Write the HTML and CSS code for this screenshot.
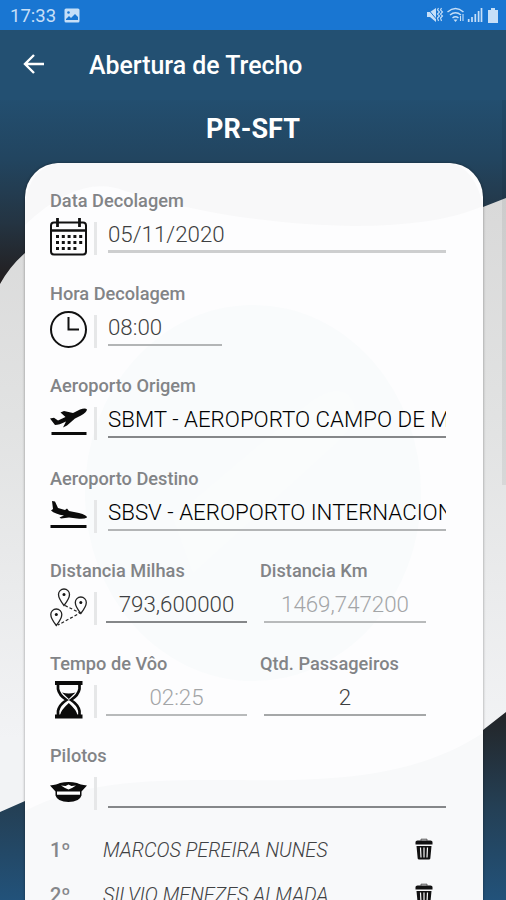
FILE: index.html
```html
<!DOCTYPE html>
<html lang="pt-BR">
<head>
<meta charset="utf-8">
<title>Abertura de Trecho</title>
<link rel="stylesheet" href="styles.css">
</head>
<body>
<div class="screen">
  <svg class="backdrop" viewBox="0 0 506 900" aria-hidden="true">
    <defs>
      <linearGradient id="sky" gradientUnits="userSpaceOnUse" x1="0" y1="90" x2="0" y2="280">
        <stop offset="0" stop-color="#235072"/><stop offset=".36" stop-color="#224560"/><stop offset=".7" stop-color="#243442"/><stop offset="1" stop-color="#231f20"/>
      </linearGradient>
      <linearGradient id="wave" x1="0" y1="0" x2="0" y2="1">
        <stop offset="0" stop-color="#d9d9d9"/><stop offset=".4" stop-color="#e1e2e2"/><stop offset="1" stop-color="#f2f3f5"/>
      </linearGradient>
      <linearGradient id="sea" gradientUnits="userSpaceOnUse" x1="0" y1="710" x2="0" y2="900">
        <stop offset="0" stop-color="#232426"/><stop offset=".5" stop-color="#243f54"/><stop offset="1" stop-color="#22527a"/>
      </linearGradient>
    </defs>
    <rect width="506" height="900" fill="url(#sky)"/>
    <path d="M0 284Q10 266 25 253C120 170 330 260 483 207L506 198V740H0Z" fill="url(#wave)"/>
    <path d="M0 740H506V812H0Z" fill="#f2f3f5"/>
    <path d="M0 812L25 801C180 740 360 820 483 730L506 712V900H0Z" fill="url(#sea)"/>
  </svg>

  <header class="status">
    <span class="clock">17:33</span>
    <svg class="photo" viewBox="0 0 16 15"><rect x=".5" y=".5" width="15" height="14" rx="1.5" fill="#c6dff8"/><path d="M2 11l3-3 2 2 4-4 3 3v3H2z" fill="#1976d2"/><circle cx="4.500" cy="4.500" r="1.300" fill="#1976d2"/></svg>
    <svg class="signals" viewBox="0 0 72 18" fill="none" stroke="#c6dff8">
      <path d="M0 6h3l6-4v14l-6-5H0z" fill="#c6dff8" stroke="none"/><path d="M0 2l11 13" stroke="#1976d2" stroke-width="1"/><path d="M11.500 2l-1 2 2 2-2 2 2 2-2 2 1 3M14.500 2l-1 2 2 2-2 2 2 2-2 2 1 3" stroke-width="1.100"/>
      <path d="M20.500 6Q28.500-1 36.500 6M23 9q5.500-4.500 11 0M25.500 12q3-2.500 6 0" stroke-width="1.500"/><path d="M28.500 16l-2-2.500h4z" fill="#c6dff8" stroke="none"/><path d="M33.500 15v-5M36 8v7" stroke-width="1.100"/>
      <path d="M41.700 16v-3M45 16v-5M48.300 16V8M51.600 16V5M54.500 16V2" stroke-width="1.700"/>
      <path d="M61 4h3V2h4v2h3v13H61z" fill="#c6dff8" stroke="none"/>
    </svg>
  </header>

  <nav class="toolbar">
    <svg class="back" viewBox="0 0 22 20"><path d="M11 1L2 10l9 9M2 10h19" fill="none" stroke="#fff" stroke-width="2.400"/></svg>
    <h1>Abertura de Trecho</h1>
  </nav>
  <h2 class="aircraft">PR-SFT</h2>

  <main class="card">
    <svg class="watermark" viewBox="0 0 458 737" aria-hidden="true"><path d="M0 40Q5 5 33 0H424Q450 4 458 43C380 78 210 63 100 28Q55 10 0 62Z" fill="#f8f8f9"/><ellipse cx="228" cy="330" rx="168" ry="188" fill="#f9fbfc"/><path d="M148 355l130-110q34-28 48-10 13 20-18 48L168 410z" fill="#fafcfc"/><path d="M0 648C130 580 320 660 458 570V737H0Z" fill="#f8f9fa"/></svg>

    <section class="field">
      <label>Data Decolagem</label>
      <div class="row">
        <svg class="icon" viewBox="0 0 38 38" fill="none" stroke="#111"><rect x="2" y="4.500" width="35" height="32" rx="3" stroke-width="2"/><path d="M2 12.500h34" stroke-width="2.600"/><path d="M8.500 0v9M30.500 0v9" stroke-width="2.800"/><path d="M7 18.500h27M7 24.500h27M7 30.500h21" stroke-width="3" stroke-dasharray="3 2.800"/></svg>
        <i class="bar"></i><div class="input thick">05/11/2020</div>
      </div>
    </section>
    <section class="field">
      <label>Hora Decolagem</label>
      <div class="row">
        <svg class="icon" viewBox="0 0 38 38" fill="none" stroke="#111" stroke-width="2"><circle cx="19.500" cy="18.500" r="17.500"/><path d="M19.500 6v12.500H30" stroke-width="2"/></svg>
        <i class="bar"></i><div class="input short">08:00</div>
      </div>
    </section>
    <section class="field">
      <label>Aeroporto Origem</label>
      <div class="row">
        <svg class="icon" viewBox="0 0 38 38" fill="#0b0b0b"><path d="M1 15.500L5 14.800L9 17.500L16.500 14L11.500 9.500L15 8L24 10L31 6.500Q36.500 4.500 38 6.500Q37.500 9.500 32 12.500L26 15.500L18 22.500L14 24.500L17 18.500Q10 22 6 22Z"/><path d="M2.500 29h35v2.900h-35z"/></svg>
        <i class="bar"></i><div class="input dark thin">SBMT - AEROPORTO CAMPO DE MARTE</div>
      </div>
    </section>
    <section class="field">
      <label>Aeroporto Destino</label>
      <div class="row">
        <svg class="icon" viewBox="0 0 38 38" fill="#0b0b0b"><path d="M3 5L6 5.500L9 12L16 14L18 12.500L20 15L30 17Q38 19 38 21.500Q35 23.500 28 22.500L20 21.500L12 22.500L10.500 21.500L15 19.500Q6 18 2 14.500L4 13Z"/><path d="M1.500 29h36v2.900h-36z"/></svg>
        <i class="bar"></i><div class="input dark">SBSV - AEROPORTO INTERNACIONAL</div>
      </div>
    </section>
    <section class="field pair">
      <div class="left"><label>Distancia Milhas</label>
        <div class="row">
          <svg class="icon" viewBox="0 0 38 38"><defs><g id="pin"><path d="M0 9Q-5.500 2-5.500-2a5.500 5.500 0 0 1 11 0Q5.500 2 0 9z" fill="none" stroke="#222" stroke-width="1.300"/><circle cy="-2" r="1.500" fill="#111"/></g></defs><use href="#pin" x="15" y="8.500"/><use href="#pin" x="31.800" y="16.500"/><use href="#pin" x="7.300" y="28.500"/><path d="M16 17.500l15 7.500L9 37" fill="none" stroke="#222" stroke-width="1.200" stroke-dasharray="3 2"/></svg>
          <i class="bar"></i><div class="input center thin">793,600000</div>
        </div>
      </div>
      <div class="right"><label>Distancia Km</label><div class="input center pale">1469,747200</div></div>
    </section>
    <section class="field pair">
      <div class="left"><label>Tempo de Vôo</label>
        <div class="row">
          <svg class="icon" viewBox="0 0 38 38"><path d="M6 0h27.500v4H6zM6 33.500h27.500v4H6z" fill="#0b0b0b"/><path d="M9 3v5q1 6 8.500 11-7.500 5-8.500 11v5M30.500 3v5q-1 6-8.500 11 7.500 5 8.500 11v5" fill="none" stroke="#0b0b0b" stroke-width="2.700"/><path d="M13 11.500q6.700 2 13.500 0l-6.700 6.500zM11 34q1-5 8.800-12 7.700 7 8.700 12z" fill="#0b0b0b"/></svg>
          <i class="bar"></i><div class="input center pale">02:25</div>
        </div>
      </div>
      <div class="right"><label>Qtd. Passageiros</label><div class="input center medium">2</div></div>
    </section>
    <section class="field">
      <label>Pilotos</label>
      <div class="row">
        <svg class="icon" viewBox="0 0 38 38"><path d="M1 12.500Q8 11.500 11 10q8.500-2 17 0 3 1.500 10 2.500l-5.500 6v4q-2 6.500-13 6.500T6.500 22.500v-4z" fill="#0b0b0b"/><path d="M8 18.500h23v3.200H8zM12 12.500l4.500.5 3-1.500 3 1.500 4.500-.5-4 2.500-3.500 1.500-3.500-1.500z" fill="#fff"/></svg>
        <i class="bar"></i><div class="input thin"></div>
      </div>
    </section>

    <ul class="pilots">
      <li><b>1º</b><em>MARCOS PEREIRA NUNES</em><svg class="trash" viewBox="0 0 18 22"><use href="#bin"/></svg></li>
      <li><b>2º</b><em>SILVIO MENEZES ALMADA</em><svg class="trash" viewBox="0 0 18 22"><g id="bin"><path d="M.5 6.500V4q0-1.500 2-1.500h13q2 0 2 1.500v2.500zM1.500 8h15l-1.200 12.500q0 1-1.500 1H4.200q-1.500 0-1.500-1z" fill="#111"/><path d="M6 3V1.200h6V3" fill="none" stroke="#555"/><path d="M5.500 9.500l.5 10M9 9.500v10M12.500 9.500l-.5 10" stroke="#fafafa" stroke-width="1.200"/></g></svg></li>
    </ul>
  </main>
  <i class="scroll"></i>
</div>
</body>
</html>
```
FILE: styles.css
```css
* { box-sizing: border-box; }
body { margin: 0; font-family: Roboto, "Noto Sans", sans-serif; }
.screen { position: relative; width: 506px; height: 900px; overflow: hidden; display: flex; flex-direction: column; }
.backdrop { position: absolute; inset: 0; width: 506px; height: 900px; z-index: -1; }
.status { height: 30px; flex: none; background: #1976d2; display: flex; align-items: center; padding: 0 7px 0 10px; color: #c6dff8; }
.clock { font-size: 18.500px; line-height: 30px; width: 54px; padding-top: 2px; }
.photo { width: 16px; height: 15px; }
.signals { width: 72px; height: 18px; margin-left: auto; }
.toolbar { height: 70px; flex: none; display: flex; align-items: center; padding-left: 23px; background: #235072; }
.back { width: 22px; height: 20px; margin-bottom: 2px; }
h1 { margin: 2px 0 0 44px; font-size: 24.900px; line-height: 30px; font-weight: 500; color: #fff; }
.aircraft { height: 63px; flex: none; margin: 0; text-align: center; font-size: 27px; line-height: 58px; font-weight: 700; color: #fff; }
.card { position: relative; z-index: 0; width: 458px; height: 760px; flex: none; margin-left: 25px; padding: 25px 37px 0 25px; border-radius: 34px 34px 0 0; background: #fdfdfe; box-shadow: 0 0 3px #0006; overflow: hidden; }
.watermark { position: absolute; inset: 0; width: 458px; height: 737px; z-index: -1; }
.field { height: 92.500px; }
label { display: block; height: 30px; font-size: 18.200px; line-height: 26px; font-weight: 500; color: #828487; white-space: nowrap; }
.row { display: flex; align-items: flex-start; }
.icon { width: 38px; height: 38px; flex: none; margin-left: -1px; overflow: visible; }
.bar { width: 3px; height: 33px; margin: 4px 10px 0 7px; flex: none; background: #e6e7e8; }
.input { flex: 1; height: 35px; border-bottom: 2px solid #b3b5b6; font-size: 22.300px; line-height: 33px; font-weight: 300; color: #3d3f41; white-space: nowrap; overflow: hidden; }
.row > .input { margin-left: 1px; }
.input.thick { border-bottom-width: 3px; border-color: #cdcecf; }
.input.short { flex: none; width: 114px; }
.input.dark { color: #000; }
.input.thin { border-color: #858789; }
.input.pale { color: #a3a5a7; border-color: #b8babb; }
.input.medium { border-color: #a5a7a8; }
.center { text-align: center; }
.pair { display: flex; }
.left { width: 210px; padding-right: 13px; }
.left .row > .input { margin-left: -1px; }
.right { width: 166px; }
.right .input { margin-left: 4px; }
.pilots { list-style: none; margin: -8px 0 0; padding: 0; }
.pilots li { height: 45px; display: flex; align-items: center; padding-right: 13px; }
.pilots b { width: 53px; font-size: 20px; font-weight: 500; color: #85878a; }
.pilots em { flex: 1; font-size: 19.800px; font-weight: 300; color: #3f4143; white-space: nowrap; }
.trash { width: 18px; height: 22px; margin-top: -2px; }
.scroll { position: absolute; right: 0; top: 100px; width: 4px; height: 385px; background: #0000000f; }
```
